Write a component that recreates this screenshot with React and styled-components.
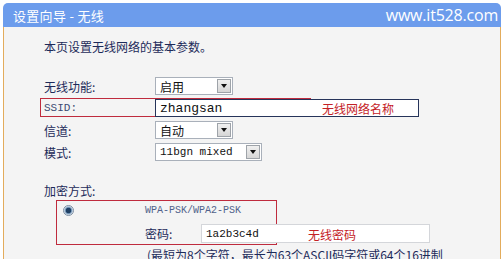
import React from "react";
import styled, { createGlobalStyle } from "styled-components";

const GlobalStyle = createGlobalStyle`
  html, body {
    margin: 0;
    padding: 0;
    background: #ffffff;
    overflow: hidden;
  }
`;

const cjk = `"Noto Sans CJK SC", "Noto Sans", sans-serif`;
const mono = `"Liberation Mono", "DejaVu Sans Mono", monospace`;

const Panel = styled.div`
  margin: 3px 2px 0 3px;
  width: 498px;
  height: 256px;
  display: flex;
  flex-direction: column;
`;

const Header = styled.div`
  height: 24px;
  flex: none;
  background: #6c9cec;
  border-radius: 5px 5px 0 0;
  display: flex;
  align-items: center;
  justify-content: space-between;
  padding: 0 3px 0 10px;
  color: #ffffff;
`;

const Title = styled.span`
  font-family: ${cjk};
  font-size: 13px;
  letter-spacing: 0.3px;
`;

const Site = styled.span`
  font-family: "Open Sans", "DejaVu Sans", sans-serif;
  font-size: 16px;
  letter-spacing: -0.2px;
`;

const Body = styled.div`
  flex: 1;
  background: #f4f4f4;
  border-left: 1px solid #e3ac5c;
  border-right: 1px solid #e3ac5c;
  padding: 12px 0 0 40px;
  color: #1d2b5a;
  font-family: ${cjk};
  font-size: 12px;
  overflow: hidden;
`;

const Intro = styled.div`
  line-height: 16px;
  height: 16px;
  margin-bottom: 20px;
`;

const Rows = styled.div`
  display: flex;
  flex-direction: column;
`;

const Row = styled.div`
  position: relative;
  display: flex;
  align-items: center;
  height: ${(p) => p.h || 22}px;
`;

const Label = styled.span`
  width: 111px;
  flex: none;
  font-family: ${(p) => (p.mono ? mono : cjk)};
  font-size: ${(p) => (p.mono ? "11px" : "12px")};
  color: ${(p) => (p.mono ? "#3b4a72" : "#1d2b5a")};
`;

const SelectBox = styled.div`
  width: ${(p) => p.w}px;
  height: 18px;
  box-sizing: border-box;
  border: 1px solid #a9b0ba;
  background: #ffffff;
  display: flex;
  align-items: center;
  justify-content: space-between;
  padding: 0 1px 0 4px;
  font-family: ${(p) => (p.mono ? mono : cjk)};
  font-size: ${(p) => (p.mono ? "11px" : "12px")};
  color: #111111;
`;

const DropBtn = styled.span`
  width: 14px;
  height: 14px;
  box-sizing: border-box;
  border: 1px solid #9ea3a9;
  background: linear-gradient(#f0f0f0, #d6d6d6);
  display: flex;
  align-items: center;
  justify-content: center;
  &::after {
    content: "";
    border-left: 3px solid transparent;
    border-right: 3px solid transparent;
    border-top: 4px solid #111111;
  }
`;

const TextInput = styled.div`
  position: relative;
  width: ${(p) => p.w}px;
  height: ${(p) => p.h}px;
  box-sizing: border-box;
  border: 1px solid ${(p) => p.border};
  background: #ffffff;
  display: flex;
  align-items: center;
  padding-left: 4px;
  font-family: ${mono};
  font-size: ${(p) => p.fs}px;
  color: #111111;
`;

const Note = styled.span`
  position: absolute;
  left: ${(p) => p.left}px;
  top: 50%;
  transform: translateY(-50%);
  font-family: ${cjk};
  font-size: 12px;
  color: #c42126;
  white-space: nowrap;
`;

const RedFrame = styled.div`
  position: absolute;
  left: ${(p) => p.left}px;
  top: ${(p) => p.top}px;
  width: ${(p) => p.w}px;
  height: ${(p) => p.h}px;
  box-sizing: border-box;
  border: 1px solid #bf2b3d;
  pointer-events: none;
`;

const Section = styled.div`
  margin-top: 20px;
  line-height: 16px;
  height: 16px;
`;

const EncBlock = styled.div`
  position: relative;
  display: grid;
  grid-template-columns: 101px 1fr;
  grid-auto-rows: auto;
`;

const RadioCell = styled.div`
  height: 22px;
  display: flex;
  align-items: center;
  padding-left: 19px;
`;

const Radio = styled.span`
  width: 11px;
  height: 11px;
  border-radius: 50%;
  box-sizing: border-box;
  border: 1px solid #7d8ea2;
  background: radial-gradient(circle, #1f3f63 0 2.5px, #6b8fb3 3px, #dfe8f0 4.5px);
`;

const Mode = styled.div`
  height: 22px;
  display: flex;
  align-items: center;
  font-family: ${mono};
  font-size: 10px;
  color: #51628a;
`;

const PwRow = styled.div`
  grid-column: 2;
  height: 25px;
  display: flex;
  align-items: center;
`;

const PwLabel = styled.span`
  width: 56px;
  flex: none;
`;

const Hint = styled.div`
  grid-column: 2;
  padding-left: 2px;
  margin-top: 1px;
  white-space: nowrap;
  line-height: 16px;
`;

export default function App() {
  return (
    <>
      <GlobalStyle />
      <Panel>
        <Header>
          <Title>设置向导 - 无线</Title>
          <Site>www.it528.com</Site>
        </Header>
        <Body>
          <Intro>本页设置无线网络的基本参数。</Intro>
          <Rows>
            <Row>
              <Label>无线功能:</Label>
              <SelectBox w={78}>
                启用
                <DropBtn />
              </SelectBox>
            </Row>
            <Row>
              <RedFrame left={-4} top={1} w={271} h={19} />
              <Label mono>SSID:</Label>
              <TextInput w={264} h={18} border="#26345a" fs={13}>
                zhangsan
                <Note left={166}>无线网络名称</Note>
              </TextInput>
            </Row>
            <Row>
              <Label>信道:</Label>
              <SelectBox w={78}>
                自动
                <DropBtn />
              </SelectBox>
            </Row>
            <Row>
              <Label>模式:</Label>
              <SelectBox w={107} mono>
                11bgn mixed
                <DropBtn />
              </SelectBox>
            </Row>
          </Rows>
          <Section>加密方式:</Section>
          <EncBlock>
            <RedFrame left={12} top={1} w={221} h={45} />
            <RadioCell>
              <Radio />
            </RadioCell>
            <Mode>WPA-PSK/WPA2-PSK</Mode>
            <PwRow>
              <PwLabel>密码:</PwLabel>
              <TextInput w={229} h={19} border="#d4d6da" fs={11}>
                1a2b3c4d
                <Note left={106}>无线密码</Note>
              </TextInput>
            </PwRow>
            <Hint>(最短为8个字符，最长为63个ASCII码字符或64个16进制</Hint>
          </EncBlock>
        </Body>
      </Panel>
    </>
  );
}
